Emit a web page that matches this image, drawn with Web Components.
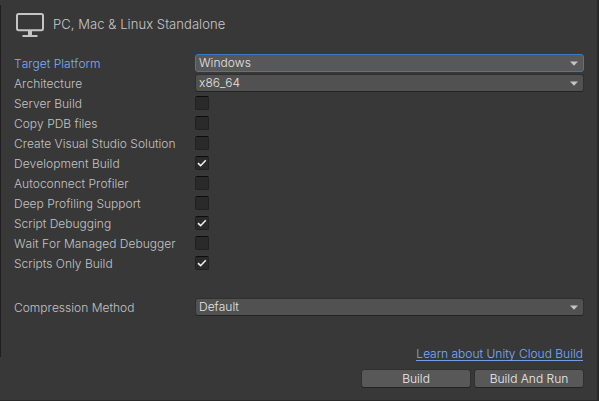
<!DOCTYPE html>
<html lang="en">
<head>
<meta charset="utf-8">
<title>Build Settings</title>
<style>
html, body { margin: 0; height: 100%; overflow: hidden; background: #383838; }
</style>
</head>
<body>
<build-panel></build-panel>
<script>
class Base extends HTMLElement {
  constructor() {
    super();
    this.attachShadow({ mode: 'open' });
  }
  connectedCallback() { this.shadowRoot.innerHTML = this.view(); }
}

customElements.define('panel-header', class extends Base {
  view() {
    return `<style>
      :host { display: flex; align-items: flex-start; gap: 9px; height: 41px; padding: 13px 0 0 15px; color: #c8c8c8; font-size: 13px; letter-spacing: .07px; box-sizing: border-box; }
      svg { display: block; }
      span { line-height: 24px; margin-top: -1px; white-space: nowrap; }
    </style>
    <svg width="28" height="24" viewBox="0 0 28 24" fill="none" stroke="#c4c4c4">
      <rect x="1" y="1" width="26" height="16.2" rx="1.6" stroke-width="2"/>
      <path d="M14 18v4" stroke-width="4"/><path d="M6.5 23h15" stroke-width="2"/>
    </svg><span><slot></slot></span>`;
  }
});

customElements.define('setting-row', class extends Base {
  view() {
    return `<style>
      :host { display: grid; grid-template-columns: 181px 389px; height: 20px; align-items: start; }
      .label { line-height: 20px; white-space: nowrap; }
      :host([active]) .label { color: #7baefa; }
    </style>
    <span class="label">${this.getAttribute('label')}</span><slot></slot>`;
  }
});

customElements.define('drop-down', class extends Base {
  view() {
    return `<style>
      :host { display: flex; align-items: center; justify-content: space-between; box-sizing: border-box; height: 18px; padding: 0 5px 0 3px;
        background: #515151; border: 1px solid #303030; border-bottom-color: #242424; border-radius: 3px; color: #e4e4e4; }
      :host([focused]) { background: #585858; border-color: #3a79bb; }
      span { line-height: 16px; }
      svg { display: block; }
    </style>
    <span><slot></slot></span>
    <svg width="8" height="5" viewBox="0 0 8 5"><path d="M0 .5h8L4 4.8z" fill="#c4c4c4"/></svg>`;
  }
});

customElements.define('check-box', class extends Base {
  view() {
    const tick = this.hasAttribute('checked')
      ? '<svg width="12" height="12" viewBox="0 0 12 12"><path d="M2 6.2l2.6 2.5L9.8 3.2" fill="none" stroke="#eeeeee" stroke-width="1.6"/></svg>' : '';
    return `<style>
      :host { display: block; box-sizing: border-box; width: 14px; height: 14px; margin-top: 2px; background: #2a2a2a;
        border: 1px solid #212121; border-top-color: #0d0d0d; border-radius: 2px; }
      svg { display: block; }
    </style>${tick}`;
  }
});

customElements.define('push-button', class extends Base {
  view() {
    return `<style>
      :host { display: block; box-sizing: border-box; width: 110px; height: 19px; background: #585858; border: 1px solid #303030;
        border-bottom-color: #242424; border-radius: 3px; color: #eeeeee; text-align: center; line-height: 18px; }
    </style><slot></slot>`;
  }
});

customElements.define('text-link', class extends Base {
  view() {
    return `<style>
      :host { display: block; width: max-content; height: 15px; line-height: 17px; color: #7baefa; border-bottom: 1px solid #6f9fe4; margin-right: 1px; }
    </style><slot></slot>`;
  }
});

customElements.define('build-panel', class extends Base {
  view() {
    const checks = [['Server Build'], ['Copy PDB files'], ['Create Visual Studio Solution'], ['Development Build', 1],
      ['Autoconnect Profiler'], ['Deep Profiling Support'], ['Script Debugging', 1], ['Wait For Managed Debugger'], ['Scripts Only Build', 1]];
    return `<style>
      :host { display: grid; grid-template-columns: 1px 596px 2px; grid-template-rows: 400px 1px; width: 599px; height: 401px;
        background: #383838; color: #c4c4c4; font: 350 12px Inter, "Liberation Sans", sans-serif; font-kerning: none; letter-spacing: 0.01px; }
      .left { height: 352px; margin-top: 5px; background: #1f1f1f; }
      .right { background: #292929; }
      .bottom { grid-column: 1 / -1; background: #292929; }
      main { display: flex; flex-direction: column; }
      .settings { padding: 13px 0 0 13px; }
      .compression { margin-top: 24px; }
      footer { display: flex; flex-direction: column; align-items: flex-end; gap: 8px; padding: 27px 13px 0 0; }
      .actions { display: flex; gap: 3px; }
    </style>
    <div class="left"></div>
    <main>
      <panel-header>PC, Mac &amp; Linux Standalone</panel-header>
      <section class="settings">
        <setting-row active label="Target Platform"><drop-down focused>Windows</drop-down></setting-row>
        <setting-row label="Architecture"><drop-down>x86_64</drop-down></setting-row>
        ${checks.map(([t, on]) => `<setting-row label="${t}"><check-box${on ? ' checked' : ''}></check-box></setting-row>`).join('')}
        <setting-row class="compression" label="Compression Method"><drop-down>Default</drop-down></setting-row>
      </section>
      <footer>
        <text-link>Learn about Unity Cloud Build</text-link>
        <div class="actions"><push-button>Build</push-button><push-button>Build And Run</push-button></div>
      </footer>
    </main>
    <div class="right"></div>
    <div class="bottom"></div>`;
  }
});
</script>
</body>
</html>
